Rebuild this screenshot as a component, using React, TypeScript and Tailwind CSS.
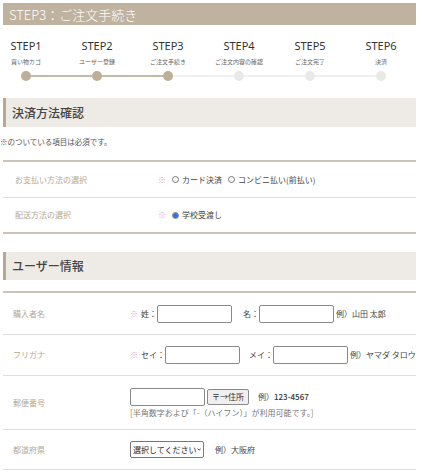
import React from "react";

const steps = [
  { t: "STEP1", s: "買い物カゴ", active: true },
  { t: "STEP2", s: "ユーザー登録", active: true },
  { t: "STEP3", s: "ご注文手続き", active: true },
  { t: "STEP4", s: "ご注文内容の確認", active: false },
  { t: "STEP5", s: "ご注文完了", active: false },
  { t: "STEP6", s: "決済", active: false },
];

function Radio({ checked }: { checked?: boolean }) {
  return (
    <span className="inline-flex w-[7px] h-[7px] rounded-full border border-[#777] items-center justify-center bg-white">
      {checked && <span className="w-[5px] h-[5px] rounded-full bg-[#2f6fe0]" />}
    </span>
  );
}

function Req() {
  return <span className="text-[#e8a6b8] mr-[3px]">※</span>;
}

function Input({ w }: { w: string }) {
  return <span className={`inline-block h-[18px] border border-[#8a8a8a] rounded-[2px] bg-white ${w}`} />;
}

export default function App() {
  return (
    <div
      className="w-[425px] h-[472px] bg-white overflow-hidden text-[#555]"
      style={{ fontFamily: '"Noto Sans CJK JP", "Noto Sans", sans-serif' }}
    >
      {/* title bar */}
      <div className="mt-[3px] ml-[3px] w-[413px] h-[22px] bg-[#bfb29f] flex items-center pl-[6px] text-white text-[13px] leading-none font-light">
        STEP3：ご注文手続き
      </div>

      {/* steps */}
      <div className="w-[407px] mt-[15px]">
        <div className="flex justify-between">
          {steps.map((st) => (
            <div key={st.t} className="w-[52px] flex flex-col items-center">
              <div className="text-[11px] leading-[12px] text-[#333]" style={{ fontFamily: '"Noto Sans", sans-serif' }}>
                {st.t}
              </div>
              <div className="mt-[6px] text-[6px] leading-[8px] text-[#666] whitespace-nowrap">{st.s}</div>
            </div>
          ))}
        </div>
        <div className="flex items-center px-[21px] mt-[5px] h-[10px]">
          {steps.map((st, i) => (
            <React.Fragment key={st.t}>
              <span
                className={`w-[10px] h-[10px] rounded-full shrink-0 ${st.active ? "bg-[#bcae97]" : "bg-[#e9e9e9]"}`}
              />
              {i < steps.length - 1 && (
                <span
                  className={`flex-1 ${i < 2 ? "h-[2px] bg-[#c4b8a6]" : "h-[2px] bg-[#efefef]"}`}
                />
              )}
            </React.Fragment>
          ))}
        </div>
      </div>

      {/* section 1 */}
      <div className="ml-[3px] w-[413px] mt-[17px]">
        <div className="h-[29px] bg-[#eeebe6] border-l-[3px] border-[#b7a991] flex items-center pl-[6px] text-[12px] font-medium text-[#444]">
          決済方法確認
        </div>
        <div className="-ml-[3px] mt-[10px] text-[7.5px] leading-[10px] text-[#555]">※のついている項目は必須です。</div>
        <div className="mt-[13px] h-[2px] bg-[#cbc3b7]" />
        <div className="h-[35px] flex items-center text-[8px]">
          <div className="w-[155px] pl-[12px] text-[#b3a897]">お支払い方法の選択</div>
          <div className="flex items-center gap-[3px] text-[#444]">
            <Req />
            <Radio />
            <span className="mr-[3px]">カード決済</span>
            <Radio />
            <span>コンビニ払い(前払い)</span>
          </div>
        </div>
        <div className="h-[1px] bg-[#dedede]" />
        <div className="h-[34px] flex items-center text-[8px]">
          <div className="w-[155px] pl-[12px] text-[#b3a897]">配送方法の選択</div>
          <div className="flex items-center gap-[3px] text-[#444]">
            <Req />
            <Radio checked />
            <span>学校受渡し</span>
          </div>
        </div>
        <div className="h-[2px] bg-[#cbc3b7]" />
      </div>

      {/* section 2 */}
      <div className="ml-[3px] w-[413px] mt-[18px]">
        <div className="h-[28px] bg-[#eeebe6] border-l-[3px] border-[#b7a991] flex items-center pl-[6px] text-[12px] font-medium text-[#444]">
          ユーザー情報
        </div>
        <div className="mt-[11px] h-[2px] bg-[#cbc3b7]" />
        <div className="h-[41px] flex items-center text-[8px]">
          <div className="w-[127px] pl-[10px] text-[#b3a897]">購入者名</div>
          <div className="flex items-center text-[#444] whitespace-nowrap">
            <Req />
            <span>姓：</span>
            <Input w="w-[75px]" />
            <span className="ml-[11px]">名：</span>
            <Input w="w-[75px]" />
            <span className="ml-[2px]">例）山田 太郎</span>
          </div>
        </div>
        <div className="h-[1px] bg-[#dedede]" />
        <div className="h-[40px] flex items-center text-[8px]">
          <div className="w-[127px] pl-[10px] text-[#b3a897]">フリガナ</div>
          <div className="flex items-center text-[#444] whitespace-nowrap">
            <Req />
            <span>セイ：</span>
            <Input w="w-[75px]" />
            <span className="ml-[9px]">メイ：</span>
            <Input w="w-[75px]" />
            <span className="ml-[2px]">例）ヤマダ タロウ</span>
          </div>
        </div>
        <div className="h-[1px] bg-[#dedede]" />
        <div className="h-[53px] flex items-center text-[8px]">
          <div className="w-[127px] pl-[10px] text-[#b3a897]">郵便番号</div>
          <div className="flex flex-col text-[#444] whitespace-nowrap">
            <div className="flex items-center">
              <Input w="w-[75px]" />
              <span className="ml-[2px] h-[16px] px-[4px] flex items-center border border-[#8a8a8a] bg-[#efefef] rounded-[2px] text-[#333]">
                〒→住所
              </span>
              <span className="ml-[9px]">例）</span>
              <span className="text-[#333] font-medium">123-4567</span>
            </div>
            <div className="mt-[2px] leading-[10px] text-[#777]">
              <span className="text-[#9a8a2a]">[</span>半角数字および「-（ハイフン）」が利用可能です。
              <span className="text-[#9a8a2a]">]</span>
            </div>
          </div>
        </div>
        <div className="h-[1px] bg-[#dedede]" />
        <div className="h-[39px] flex items-center text-[8px]">
          <div className="w-[127px] pl-[10px] text-[#b3a897]">都道府県</div>
          <div className="flex items-center text-[#444] whitespace-nowrap">
            <span className="h-[17px] w-[74px] border border-[#777] rounded-[2px] flex items-center justify-between px-[2px] text-[#222] text-[8px]">
              <span>選択してください</span>
              <svg width="7" height="5" viewBox="0 0 7 5">
                <path d="M1 1 L3.5 3.5 L6 1" stroke="#222" strokeWidth="1.4" fill="none" />
              </svg>
            </span>
            <span className="ml-[11px]">例）大阪府</span>
          </div>
        </div>
        <div className="h-[1px] bg-[#dedede]" />
      </div>
    </div>
  );
}
